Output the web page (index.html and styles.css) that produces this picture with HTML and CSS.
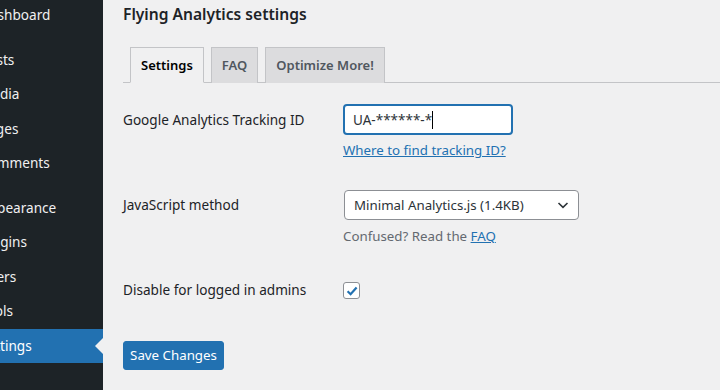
FILE: index.html
```html
<!DOCTYPE html>
<html lang="en">
<head>
<meta charset="utf-8">
<title>Flying Analytics settings</title>
<link rel="stylesheet" href="styles.css">
</head>
<body>
<div class="page">
  <aside class="sidebar">
    <ul class="menu">
      <li class="item first">Dashboard</li>
      <li class="item sep">Posts</li>
      <li class="item">Media</li>
      <li class="item">Pages</li>
      <li class="item">Comments</li>
      <li class="item sep">Appearance</li>
      <li class="item">Plugins</li>
      <li class="item">Users</li>
      <li class="item">Tools</li>
      <li class="item active">Settings</li>
    </ul>
  </aside>
  <main class="content">
    <h1 class="title">Flying Analytics settings</h1>
    <nav class="tabs">
      <span class="tab tab-active">Settings</span>
      <span class="tab">FAQ</span>
      <span class="tab">Optimize More!</span>
    </nav>
    <div class="form">
      <div class="row row-id">
        <div class="label">Google Analytics Tracking ID</div>
        <div class="field">
          <div class="input"><span class="input-text">UA-******-*</span><span class="caret"></span></div>
          <a class="link help" href="#">Where to find tracking ID?</a>
        </div>
      </div>
      <div class="row row-method">
        <div class="label">JavaScript method</div>
        <div class="field">
          <div class="select"><span>Minimal Analytics.js (1.4KB)</span>
            <svg class="chevron" width="14" height="14" viewBox="0 0 14 14"><path d="M2.5 5 L7 9.3 L11.5 5" fill="none" stroke="#2c3338" stroke-width="1.6"/></svg>
          </div>
          <p class="desc">Confused? Read the <a class="link" href="#">FAQ</a></p>
        </div>
      </div>
      <div class="row row-admin">
        <div class="label">Disable for logged in admins</div>
        <div class="field">
          <span class="checkbox"><svg width="14" height="14" viewBox="0 0 14 14"><path d="M2.6 7.2 L5.6 10.2 L11.6 3.4" fill="none" stroke="#2271b1" stroke-width="2.2"/></svg></span>
        </div>
      </div>
    </div>
    <button class="button" type="button">Save Changes</button>
  </main>
</div>
</body>
</html>
```
FILE: styles.css
```css
* { box-sizing: border-box; }
html, body { margin: 0; padding: 0; }
body {
  width: 720px;
  height: 390px;
  overflow: hidden;
  background: #f0f0f1;
  font-family: "Noto Sans", "Open Sans", sans-serif;
  color: #1d2327;
}
.page { display: flex; height: 390px; }
.sidebar {
  width: 103px;
  flex: none;
  background: #1d2327;
  overflow: hidden;
}
.menu {
  list-style: none;
  margin: -2.2px 0 0 0;
  padding: 0;
}
.item {
  position: relative;
  height: 34.4px;
  line-height: 34.4px;
  padding-left: 0;
  text-indent: -20px;
  white-space: nowrap;
  color: #f0f0f1;
  font-size: 13.6px;
}
.item.sep { margin-top: 10.6px; }
.item.active { background: #2271b1; color: #fff; }
.item.active::after {
  content: "";
  position: absolute;
  right: 0;
  top: 50%;
  margin-top: -8px;
  border-style: solid;
  border-width: 8px 8px 8px 0;
  border-color: transparent #f0f0f1 transparent transparent;
}
.content {
  flex: 1;
  padding-left: 20px;
}
.title {
  margin: 0;
  font-size: 15.6px;
  font-weight: 600;
  line-height: 28px;
  color: #1d2327;
}
.tabs {
  margin-top: 19px;
  display: flex;
  gap: 7px;
  padding-left: 7px;
  border-bottom: 1px solid #c3c4c7;
  height: 36px;
}
.tab {
  height: 36px;
  padding: 0 10px;
  line-height: 35px;
  font-size: 13px;
  font-weight: 600;
  color: #50575e;
  background: #dcdcde;
  border: 1px solid #c3c4c7;
  border-bottom: none;
}
.tab-active {
  background: #f0f0f1;
  color: #000;
  height: 36px;
  border-bottom: 1px solid #f0f0f1;
}
.form {
  display: flex;
  flex-direction: column;
  margin-top: 21px;
}
.row {
  display: grid;
  grid-template-columns: 220px 1fr;
  align-items: start;
}
.label {
  font-size: 13.6px;
  line-height: 20px;
  color: #1d2327;
}
.row-id .label { margin-top: 6px; }
.row-method { margin-top: 30px; }
.row-method .label { margin-top: 5px; }
.row-admin { margin-top: 34px; }
.field { display: flex; flex-direction: column; align-items: flex-start; }
.input {
  width: 170px;
  height: 31px;
  background: #fff;
  border: 2px solid #2271b1;
  border-radius: 4px;
  padding: 0 8px;
  display: flex;
  align-items: center;
  font-size: 13.5px;
  color: #2c3338;
}
.caret { display: inline-block; width: 1px; height: 18px; background: #000; margin-left: 0; }
.link { color: #2271b1; text-decoration: underline; }
.help { font-size: 13.3px; line-height: 20px; margin-top: 5px; }
.select {
  width: 235px;
  height: 30px;
  margin-left: 1px;
  background: #fff;
  border: 1px solid #8c8f94;
  border-radius: 4px;
  padding: 0 8px 0 9px;
  display: flex;
  align-items: center;
  justify-content: space-between;
  font-size: 13.3px;
  color: #2c3338;
}
.chevron { flex: none; }
.desc {
  margin: 6px 0 0 0;
  font-size: 13.3px;
  line-height: 20px;
  color: #646970;
}
.checkbox {
  width: 17px;
  height: 17px;
  margin-top: 2px;
  border: 1px solid #8c8f94;
  border-radius: 3px;
  background: #fff;
  display: flex;
  align-items: center;
  justify-content: center;
}
.button {
  margin-top: 41px;
  width: 101px;
  height: 29px;
  padding: 0;
  background: #2271b1;
  border: 1px solid #2271b1;
  border-radius: 3px;
  color: #fff;
  font-family: inherit;
  font-size: 13.3px;
  line-height: 27px;
}
```
